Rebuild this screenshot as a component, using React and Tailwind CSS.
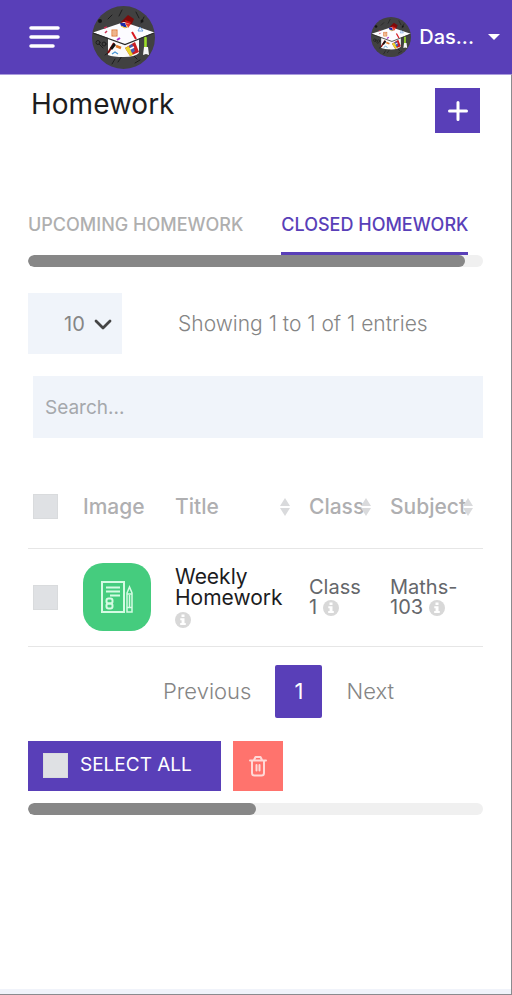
import React from "react";

function Logo({ className }) {
  return (
    <svg viewBox="0 0 63 63" className={className} role="img" aria-label="School logo">
      <circle cx="31.5" cy="31.5" r="31.5" fill="#414141" />
      <g stroke="#1d1d1d" fill="none" strokeWidth="1" strokeLinecap="round">
        <path d="M30 4l-3 6M44 6l3 6M52 11l-3 6M20 9l-4 4M13 49l7-5M26 56l4-6M20 58l3-5M45 53l-4-4" />
        <circle cx="6" cy="36.500" r="2" />
        <circle cx="12" cy="38" r="2" />
        <path d="M7 38l4 4M43 57l5-3" />
      </g>
      <circle cx="8" cy="15" r="2" fill="#151515" />
      <circle cx="50" cy="15" r="1.500" fill="#151515" />
      <path d="M29 16L36 9L42 13L38 22L31 21Z" fill="#7d0a0a" />
      <path d="M33 14l6 2-3 6z" fill="#c81414" />
      <path d="M16 32h31v15q-4 4-15 4t-16-2z" fill="#fafafa" />
      <path d="M1 26.500L32 16L62.500 26.500L33 38Z" fill="#fcfcff" />
      <path d="M28 17l5 0 2 5-6-2z" fill="#1c2aa8" />
      <path d="M33 17l6 1-3 4z" fill="#e8372a" />
      <path d="M29 20l4 2 3-2" stroke="#f2c531" strokeWidth="1" fill="none" />
      <path d="M1 27L33 38.500L62 27" fill="none" stroke="#292929" strokeWidth="1.200" />
      <rect x="20" y="24" width="5" height="6" fill="#f7d8bd" stroke="#dc7432" />
      <path d="M21 26h3M21 28h3" stroke="#dc7432" strokeWidth=".7" />
      <path d="M40 26l4 7" stroke="#d81921" strokeWidth="2" />
      <path d="M12 22l3-1M13 27l2-2" stroke="#c93156" strokeWidth="1.500" />
      <path d="M48 21l-2 4h5z" stroke="#6b9fdf" fill="none" />
      <path d="M25 34l3-2" stroke="#a831c9" strokeWidth="2" />
      <path d="M16 47l6-10" stroke="#850808" strokeWidth="2" />
      <path d="M18 42l4-5 2 2-4 5z" fill="#111" />
      <path d="M24 40l5 2" stroke="#e0772a" strokeWidth="2.500" />
      <path d="M20 48l3-2 3 2" stroke="#4a96d5" strokeWidth="1.300" fill="none" />
      <path d="M33 42l10-6 4 10-9 4z" fill="#c91e23" />
      <path d="M33 42l4-2 4 9-3 1z" fill="#e6d52b" />
      <path d="M37 40l3-2 3 7-3 2z" fill="#4361b5" />
      <path d="M38 43l4-2" stroke="#fff" strokeWidth="1.500" />
      <path d="M53.500 32v10" stroke="#9bdc28" strokeWidth="2.600" strokeLinecap="round" />
      <path d="M52 41h4l1 8-3-1-3 1z" fill="#f6f6f6" />
    </svg>
  );
}

function Sort({ className = "" }) {
  return (
    <svg viewBox="0 0 10 18" className={"absolute top-1/2 h-[18px] w-[10px] -translate-y-1/2 " + className} fill="#d9dadc" aria-hidden="true">
      <path d="M5 0l5 8H0zM0 10h10l-5 8z" />
    </svg>
  );
}

function Info() {
  return (
    <svg viewBox="0 0 16 16" className="inline-block h-4 w-4 align-[-2px]" role="img" aria-label="Details">
      <circle cx="8" cy="8" r="8" fill="#d8d8d8" />
      <path d="M6.500 2.500h3v2.500h-3zM5.300 6.200h4.200v4.800h1.300v2H5.200v-2h1.400V8.200H5.300z" fill="#fff" />
    </svg>
  );
}

function Check({ label }) {
  return (
    <input
      type="checkbox"
      aria-label={label}
      className="block h-[25px] w-[25px] shrink-0 appearance-none border border-[#d9dbdd] bg-[#dfe1e4] checked:bg-[#8a80c8]"
    />
  );
}

function ScrollBar({ children }) {
  return <div className="h-3 overflow-hidden rounded-full bg-[#f0f0f0]">{children}</div>;
}

export default function App() {
  return (
    <div className="flex min-h-screen flex-col border-b border-[#8b8b8f] bg-white font-[Inter,sans-serif] text-xl text-[#858585]">
      <header className="flex h-[74px] items-center bg-[#593fb8] pl-7 pr-3 text-white">
        <button aria-label="Open menu" className="h-8 w-8">
          <svg viewBox="0 0 32 32" className="h-8 w-8" stroke="currentColor" strokeWidth="3.500" strokeLinecap="round">
            <path d="M3 7h27M3 16h27M3 25h22" />
          </svg>
        </button>
        <Logo className="ml-8 h-[63px] w-[63px]" />
        <button className="ml-auto flex items-center">
          <Logo className="mr-2 h-10 w-10" />
          <span className="font-medium">Das...</span>
          <svg viewBox="0 0 12 6" className="ml-[14px] h-[6px] w-3" fill="currentColor" aria-hidden="true">
            <path d="M0 0h12L6 6z" />
          </svg>
        </button>
      </header>

      <main className="flex-1 border-r border-[#8b8b8f] border-t border-t-[#a99bdc] px-7">
        <div className="flex items-start justify-between pl-[3px] pr-[3px] pt-[13px]">
          <h1 className="text-[28px] leading-8 text-[#1c1c1e]">Homework</h1>
          <button aria-label="Add homework" className="flex h-[45px] w-[45px] items-center justify-center bg-[#593fb8] text-white">
            <svg viewBox="0 0 20 20" className="h-5 w-5" stroke="currentColor" strokeWidth="3" strokeLinecap="round">
              <path d="M1.500 10h17M10 1.500v17" />
            </svg>
          </button>
        </div>

        <nav className="mt-[70px] flex gap-[38px] whitespace-nowrap text-lg leading-[44px] font-medium">
          <a href="#upcoming" className="h-[52px] text-[#afafaf]">UPCOMING HOMEWORK</a>
          <a href="#closed" className="h-[52px] border-b-[3px] border-[#593fb8] text-[#593fb8]">CLOSED HOMEWORK</a>
        </nav>
        <ScrollBar>
          <div className="h-full w-[96%] rounded-full bg-[#878787]" />
        </ScrollBar>

        <div className="mt-[26px] flex items-center">
          <div className="relative">
            <select aria-label="Entries per page" className="h-[61px] w-[94px] appearance-none bg-[#f0f4fa] pl-9">
              <option>10</option>
              <option>25</option>
              <option>50</option>
            </select>
            <svg viewBox="0 0 18 12" className="pointer-events-none absolute right-[10px] top-[26px] h-3 w-[18px]" fill="none" stroke="#454545" strokeWidth="2.800" strokeLinecap="round" strokeLinejoin="round">
              <path d="M2 2l7 7 7-7" />
            </svg>
          </div>
          <p className="ml-14 text-[21px] font-light">Showing 1 to 1 of 1 entries</p>
        </div>
        <div className="mt-[22px] pl-[5px]">
          <input
            type="search"
            aria-label="Search homework"
            placeholder="Search..."
            className="block h-[62px] w-full bg-[#f0f4fa] px-3 text-[19px] placeholder:text-[#a5a8ac]"
          />
        </div>

        <table className="mt-[28px] w-full table-fixed border-collapse text-left">
          <colgroup>
            <col className="w-[55px]" />
            <col className="w-[92px]" />
            <col />
            <col className="w-[81px]" />
            <col className="w-[93px]" />
          </colgroup>
          <thead className="text-[21px] text-[#afafb1]">
            <tr className="h-[82px] border-b border-[#e6e6e6]">
              <th className="pl-[5px]"><Check label="Select every row" /></th>
              <th className="font-medium">Image</th>
              <th className="relative font-medium">Title<Sort className="right-[19px]" /></th>
              <th className="relative font-medium">Class<Sort className="right-[19px]" /></th>
              <th className="relative font-medium">Subject<Sort className="right-[10px]" /></th>
            </tr>
          </thead>
          <tbody>
            <tr className="h-[98px] border-b border-[#e6e6e6]">
              <td className="pl-[5px]"><Check label="Select Weekly Homework" /></td>
              <td>
                <div className="flex h-[68px] w-[68px] items-center justify-center rounded-[20px] bg-[#45cc7e]">
                  <svg viewBox="0 0 32 32" className="h-8 w-8" fill="none" stroke="#d5fbe3" strokeWidth="2" aria-hidden="true">
                    <path d="M1 1h22v30H1zM5 6.500h14M5 10.500h14M9 14.500h10" />
                    <rect x="5.500" y="17.500" width="6" height="5" rx="2" />
                    <rect x="5.500" y="22.500" width="6" height="5" rx="2" />
                    <path d="M26 12l2.500-6 2.500 6v19h-5zM26 13h5M26 26.500h5M28.500 14v12" strokeWidth="1.500" />
                  </svg>
                </div>
              </td>
              <td className="text-[21px] leading-[21px] text-[#1c1c1e]">Weekly<br />Homework<br /><Info /></td>
              <td className="leading-5 text-[#65676b]">Class<br />1 <Info /></td>
              <td className="leading-5 text-[#65676b]">Maths-<br />103 <Info /></td>
            </tr>
          </tbody>
        </table>

        <nav aria-label="Pages" className="mt-[18px] flex items-center justify-center gap-6 pl-[46px] text-[22px]">
          <button className="font-light">Previous</button>
          <button aria-current="page" className="h-[53px] w-[47px] rounded-[2px] bg-[#593fb8] text-white">1</button>
          <button className="font-light">Next</button>
        </nav>

        <div className="mt-[23px] flex gap-3">
          <label className="flex h-[50px] w-[193px] items-center gap-3 bg-[#593fb8] pl-[15px] text-[19px] text-white">
            <Check />
            SELECT ALL
          </label>
          <button aria-label="Delete selected" className="flex h-[50px] w-[50px] items-center justify-center bg-[#ff736d]">
            <svg viewBox="0 0 18 22" className="h-[22px] w-[18px]" fill="none" stroke="#ffd9d7" strokeWidth="2" strokeLinecap="round" strokeLinejoin="round">
              <path d="M1 5.500h16M5 5l1.500-3h5L13 5M3 5.500v12.500q0 2.500 2.500 2.500h7q2.500 0 2.500-2.500V5.500M7.500 10v5.500M10.500 10v5.500" />
            </svg>
          </button>
        </div>
        <div className="mt-3">
          <ScrollBar>
            <div className="h-full w-1/2 rounded-full bg-[#878787]" />
          </ScrollBar>
        </div>
      </main>
      <footer className="h-[5px] border-r border-[#8b8b8f] bg-[#f0f3fa]" />
    </div>
  );
}
